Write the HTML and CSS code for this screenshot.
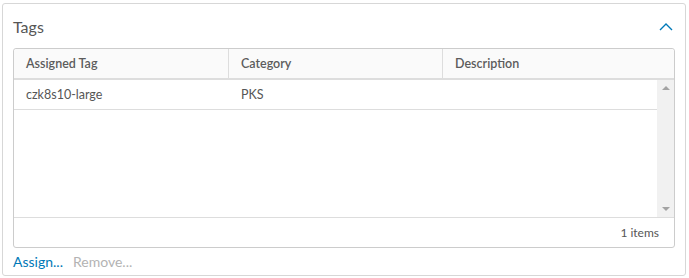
FILE: index.html
```html
<!DOCTYPE html>
<html>
<head>
<meta charset="utf-8">
<link rel="stylesheet" href="styles.css">
</head>
<body>
<div class="card">
  <div class="card-header">
    <span class="title">Tags</span>
    <svg class="chevron" width="14" height="9" viewBox="0 0 14 9"><path d="M1 8 L7 2 L13 8" fill="none" stroke="#0079b8" stroke-width="1.4"/></svg>
  </div>
  <div class="grid">
    <div class="grid-head">
      <div class="col c1">Assigned Tag</div>
      <div class="col c2">Category</div>
      <div class="col c3">Description</div>
    </div>
    <div class="grid-body">
      <div class="rows">
        <div class="row">
          <div class="cell c1">czk8s10-large</div>
          <div class="cell c2">PKS</div>
          <div class="cell c3"></div>
        </div>
      </div>
      <div class="scrollbar">
        <span class="arrow up"></span>
        <span class="arrow down"></span>
      </div>
    </div>
    <div class="grid-foot">1 items</div>
  </div>
  <div class="actions">
    <a class="link">Assign...</a>
    <span class="link disabled">Remove...</span>
  </div>
</div>
</body>
</html>
```
FILE: styles.css
```css
html, body {
  margin: 0;
  padding: 0;
  background: #fff;
}
body {
  font-family: Lato, "Liberation Sans", sans-serif;
  color: #565656;
}
.card {
  margin: 3px 3px 2px 2px;
  height: 273px;
  border: 1px solid #d7d7d7;
  border-radius: 3px;
  box-sizing: border-box;
  padding: 0 10px;
  display: flex;
  flex-direction: column;
}
.card-header {
  height: 44px;
  flex: none;
  display: flex;
  align-items: center;
  justify-content: space-between;
}
.title {
  font-size: 16px;
  color: #565656;
}
.chevron {
  margin-right: 2px;
  margin-top: 1px;
}
.grid {
  border: 1px solid #ccc;
  border-radius: 3px;
  display: flex;
  flex-direction: column;
  height: 200px;
  flex: none;
  box-sizing: border-box;
}
.grid-head {
  display: flex;
  height: 29px;
  flex: none;
  background: #fafafa;
  border-bottom: 2px solid #ddd;
  border-radius: 3px 3px 0 0;
  font-size: 12.5px;
  font-weight: 600;
  color: #5c5c5c;
}
.col {
  display: flex;
  align-items: center;
  padding-left: 12px;
  box-sizing: border-box;
}
.col.c1, .cell.c1 { width: 215px; }
.col.c2, .cell.c2 { width: 214px; }
.col.c1, .col.c2 { border-right: 1px solid #ddd; }
.col.c3, .cell.c3 { flex: 1; }
.grid-body {
  display: flex;
  height: 137px;
  flex: none;
}
.rows {
  flex: 1;
}
.row {
  display: flex;
  height: 29px;
  border-bottom: 1px solid #ddd;
  font-size: 12.5px;
  color: #565656;
}
.cell {
  display: flex;
  align-items: center;
  padding-left: 12px;
  box-sizing: border-box;
}
.scrollbar {
  width: 17px;
  background: #f1f1f1;
  display: flex;
  flex-direction: column;
  justify-content: space-between;
  align-items: center;
  padding: 6px 0;
  box-sizing: border-box;
}
.arrow {
  width: 0;
  height: 0;
  border-left: 4px solid transparent;
  border-right: 4px solid transparent;
}
.arrow.up { border-bottom: 4px solid #a3a3a3; }
.arrow.down { border-top: 4px solid #a3a3a3; }
.grid-foot {
  height: 29px;
  flex: none;
  border-top: 1px solid #ddd;
  display: flex;
  align-items: center;
  justify-content: flex-end;
  padding-right: 15px;
  font-size: 12px;
  color: #565656;
}
.actions {
  flex: 1;
  display: flex;
  gap: 10px;
  align-items: center;
  font-size: 14px;
  padding-bottom: 1px;
}
.link { color: #0079b8; }
.link.disabled { color: #b3b3b3; }
```
